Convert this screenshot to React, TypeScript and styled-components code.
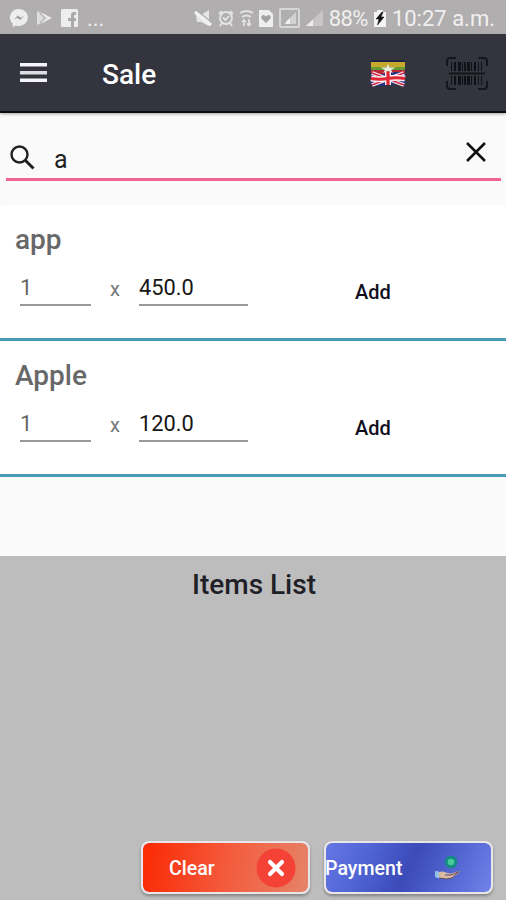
import React from "react";
import styled, { createGlobalStyle } from "styled-components";

const GlobalStyle = createGlobalStyle`
  * { box-sizing: border-box; }
  body { margin: 0; background: #bdbdbd; font-family: Roboto, sans-serif; }
`;

const Screen = styled.div`
  width: 506px;
  height: 900px;
  display: flex;
  flex-direction: column;
  overflow: hidden;
  background: #fafafa;
`;

const StatusBar = styled.div`
  height: 34px;
  flex: none;
  display: flex;
  align-items: flex-start;
  justify-content: space-between;
  padding: 7px 11px 0 10px;
  background: #b0aeaf;
  border-bottom: 1px solid #b9b9b9;
  color: #f0f0f0;
`;

const StatusGroup = styled.div<{ $gap: number }>`
  display: flex;
  align-items: center;
  gap: ${(p) => p.$gap}px;
  height: 22px;
`;

const StatusText = styled.span<{ $spacing?: number }>`
  margin-top: 2px;
  font-size: 22px;
  line-height: 22px;
  white-space: nowrap;
  letter-spacing: ${(p) => p.$spacing ?? 0}px;
`;

const AppBar = styled.header`
  height: 79px;
  flex: none;
  display: flex;
  align-items: center;
  padding: 1px 18px 0 19px;
  background: #33343d;
  border-bottom: 2px solid #0b0b0e;
  box-shadow: 0 1px 3px rgba(0, 0, 0, 0.35);
`;

const Title = styled.h1`
  margin: 3px auto 0 55px;
  color: #fff;
  font-size: 28px;
  line-height: 32px;
  font-weight: 500;
`;

const BarcodeSlot = styled.div`
  display: flex;
  margin-left: 41px;
`;

const SearchBar = styled.div`
  height: 68px;
  flex: none;
  display: flex;
  align-items: flex-start;
  margin: 0 5px 24px 6px;
  padding: 31px 14px 0 3px;
  border-bottom: 3px solid #f06590;
`;

const Query = styled.span`
  margin: 2px auto 0 18px;
  color: #222;
  font-size: 25px;
  line-height: 28px;
`;

const CloseSlot = styled.div`
  display: flex;
  margin-top: -3px;
`;

const Card = styled.article`
  height: 136px;
  flex: none;
  padding: 19px 15px 0;
  background: #fff;
  border-bottom: 3px solid #4a9bb8;
  border-radius: 4px 4px 0 0;
`;

const ItemName = styled.h2`
  margin: 0;
  color: #686868;
  font-size: 28px;
  line-height: 32px;
  font-weight: 500;
`;

const ItemRow = styled.div`
  display: flex;
  align-items: flex-start;
  padding: 19px 0 0 5px;
`;

const Field = styled.span<{ $width: number; $muted?: boolean }>`
  width: ${(p) => p.$width}px;
  height: 31px;
  border-bottom: 2px solid #999;
  color: ${(p) => (p.$muted ? "#666" : "#151515")};
  font-size: 21.8px;
  line-height: 26px;
`;

const Times = styled.span`
  width: 48px;
  text-align: center;
  color: #777;
  font-size: 20px;
  line-height: 28px;
`;

const AddButton = styled.button`
  margin: 4px 0 0 107px;
  padding: 0;
  border: 0;
  background: none;
  color: #10101c;
  font: 500 20px/26px Roboto, sans-serif;
`;

const ItemsPanel = styled.section`
  margin-top: auto;
  height: 344px;
  flex: none;
  display: flex;
  flex-direction: column;
  justify-content: space-between;
  padding: 13px 13px 6px 0;
  background: #bdbdbd;
`;

const PanelTitle = styled.h2`
  margin: 0 0 0 15px;
  text-align: center;
  color: #1e1f27;
  font-size: 28px;
  line-height: 32px;
  font-weight: 500;
`;

const Actions = styled.div`
  display: flex;
  justify-content: flex-end;
  gap: 14px;
`;

const ActionButton = styled.button<{ $fill: string; $inset: number; $end: number }>`
  width: 169px;
  height: 53px;
  display: flex;
  align-items: center;
  justify-content: space-between;
  padding: 0 ${(p) => p.$end}px 0 ${(p) => p.$inset}px;
  border: 2px solid #e9e6ea;
  border-radius: 8px;
  background: ${(p) => p.$fill} padding-box;
  box-shadow: 0 2px 3px rgba(0, 0, 0, 0.3);
  color: #fff;
  font: 500 19.6px/26px Roboto, sans-serif;
`;

const ActionLabel = styled.span<{ $pull?: number }>`
  margin: 2px 0 0 ${(p) => -(p.$pull ?? 0)}px;
`;

const Icon = styled.svg`
  display: block;
  flex: none;
  overflow: visible;
`;

const Messenger = () => (
  <Icon width="18" height="18" viewBox="0 0 18 18">
    <path d="M9 0a9 8.5 0 0 0-6.2 14.7V18l3-1.5A9 8.5 0 1 0 9 0z" fill="#ededed" />
    <path d="M4 10.500l4-4 2.500 2.300L14 7l-4 4-2.500-2.300z" fill="#99979a" />
  </Icon>
);

const Play = () => (
  <Icon width="15" height="16" viewBox="0 0 15 16">
    <path d="M0 1v14l9-4.500V5.500z" fill="#dedddd" />
    <path d="M3 3l5 5-5 5" fill="none" stroke="#b0aeaf" strokeWidth="1.200" />
    <path d="M3 2l12 6-12 6 7-6z" fill="#eee" />
  </Icon>
);

const Facebook = () => (
  <Icon width="17" height="18" viewBox="0 0 17 18">
    <rect width="17" height="18" rx="1.500" fill="#ededed" />
    <path d="M10 18v-6H7V9h3V6q0-3 3-3h2v3h-2v3h2v3h-2v6z" fill="#aaa8a9" />
  </Icon>
);

const Muted = () => (
  <Icon width="17" height="17" viewBox="0 0 17 17">
    <path d="M1 5h5l8-5v16l-8-4H2z" fill="#e6e5e5" />
    <path d="M1 0l16 12.500" stroke="#b0aeaf" strokeWidth="1.500" />
    <path d="M0 2l16 13" stroke="#f2f1f1" strokeWidth="3" />
  </Icon>
);

const Alarm = () => (
  <Icon width="16" height="18" viewBox="0 0 16 18" fill="none" stroke="#e6e5e5" strokeWidth="1.800">
    <circle cx="8" cy="9" r="6" />
    <path d="M1 5l3-3M15 5l-3-3M4 14l-2 3M12 14l2 3M5 8.500l2.500 2.500L11 7" />
  </Icon>
);

const Wifi = () => (
  <Icon width="13" height="17" viewBox="0 0 13 17" fill="none" stroke="#e4e3e3" strokeWidth="2">
    <path d="M0 3q6.500-4 13 0M2 7q4.500-3 9 0" />
    <path d="M4 10v6M2 12l2-2 2 2M9 9v6M7 13.500l2 2 2-2" strokeWidth="1.700" />
  </Icon>
);

const HeartCard = () => (
  <Icon width="14" height="17" viewBox="0 0 14 17">
    <path d="M0 0h10l4 4v13H0z" fill="#efeeee" />
    <path d="M7 13L2.500 8.500q-1-3 1.700-3.500Q6 5 7 6.500 8 5 9.800 5q2.700.5 1.700 3.500z" fill="#a3a1a2" />
  </Icon>
);

const BoxedSignal = () => (
  <Icon width="21" height="20" viewBox="0 0 21 20">
    <rect x="1" y="1" width="19" height="18" rx="1" fill="none" stroke="#d8d7d7" strokeWidth="2" />
    <path d="M5 16L17 4v12z" fill="#d3d2d2" />
    <path d="M7 16v-2l4-4v6z" fill="#f1f1f1" />
  </Icon>
);

const Signal = () => (
  <Icon width="17" height="17" viewBox="0 0 17 17">
    <path d="M0 16L17 0v16z" fill="#c8c6c7" />
    <path d="M0 16l7-6.500V16z" fill="#eee" />
  </Icon>
);

const Battery = () => (
  <Icon width="12" height="17" viewBox="0 0 12 17">
    <path d="M0 2h3V0h6v2h3v15H0z" fill="#f4f4f4" />
    <path d="M8 2L2 9h3l-1.500 6L10 7H7l2-5z" fill="#111" stroke="#111" strokeWidth=".5" />
  </Icon>
);

const Menu = () => (
  <Icon width="28" height="20" viewBox="0 0 28 20" fill="#f4f4fa">
    <rect x="1" y="0" width="27" height="3.500" />
    <rect x="1" y="8" width="27" height="3.500" fill="#dddde4" />
    <rect x="1" y="15.500" width="27" height="3.500" />
  </Icon>
);

const Flags = () => (
  <Icon width="34" height="27" viewBox="0 0 34 27">
    <rect width="34" height="3" fill="#1c2446" />
    <rect y="2" width="34" height="5" fill="#c9a92d" />
    <rect y="7" width="34" height="4" fill="#669b35" />
    <path d="M0 10h34v4H0z" fill="#b92736" />
    <path d="M0 13q9 2 17 0t17 0v13q-8-3-17-1-9 2-17 0z" fill="#232e82" />
    <path d="M1 13l32 12M33 13L1 25" stroke="#f0edf4" strokeWidth="4" />
    <path d="M1 13l32 12M33 13L1 25" stroke="#d82743" strokeWidth="1.600" />
    <path d="M17 12v13M0 18.500q9 1.500 17 0t17 0" fill="none" stroke="#f6edf1" strokeWidth="6" />
    <path d="M17 12v13M0 18.500q9 1.500 17 0t17 0" fill="none" stroke="#e02434" strokeWidth="3.200" />
    <path d="M17 4l1.500 3.500h6L20 10l2 3-5-2-5 2 2-3-4.500-2.500h6z" fill="#e9eddd" />
  </Icon>
);

const bars = [[5, 1], [8, 2], [12, 3], [16, 1], [18, 2], [21, 3], [25, 1], [28, 2], [32, 1], [35, 1]];

const Barcode = () => (
  <Icon width="42" height="33" viewBox="0 0 42 33">
    <path
      d="M1 9V4q0-3 3-3h6M32 1h6q3 0 3 3v5M1 24v5q0 3 3 3h6M32 32h6q3 0 3-3v-5M3 16.500h36"
      fill="none"
      stroke="#15161b"
      strokeWidth="2"
    />
    {bars.map(([x, w]) => (
      <path key={x} d={`M${x} 5h${w}v9h-${w}zM${x} 19h${w}v9h-${w}z`} fill="#111217" />
    ))}
  </Icon>
);

const Search = () => (
  <Icon width="27" height="27" viewBox="0 0 27 27" fill="none" stroke="#202020">
    <circle cx="10.500" cy="10.500" r="8" strokeWidth="2.400" />
    <path d="M16.500 16.500l8 8" strokeWidth="3" />
  </Icon>
);

const Close = () => (
  <Icon width="22" height="22" viewBox="0 0 22 22">
    <path d="M2 2l18 18M20 2L2 20" stroke="#111" strokeWidth="2.600" />
  </Icon>
);

const ClearMark = () => (
  <Icon width="40" height="40" viewBox="0 0 40 40">
    <circle cx="20" cy="20" r="19.500" fill="#f44336" />
    <path d="M14 14l12 12M26 14L14 26" stroke="#fff" strokeWidth="4.200" strokeLinecap="round" />
  </Icon>
);

const PayMark = () => (
  <Icon width="26" height="26" viewBox="0 0 26 26">
    <circle cx="16" cy="7" r="6.300" fill="#138b83" />
    <circle cx="16" cy="7" r="3.300" fill="#47ca9a" />
    <path d="M0 16l4 .5v7L0 22z" fill="#91c3e4" />
    <path d="M4 17q5-1.500 8 1l4 .5 8-2.500q2 .5-1 2.500l-6 4.500q-5 2-13 0z" fill="#d8b9a1" />
    <path d="M10 20h6q3-1 8-3.500L17 23q-5 2-13 0" fill="none" stroke="#5c4a66" strokeWidth="1" />
  </Icon>
);

const items = [
  { name: "app", price: "450.0" },
  { name: "Apple", price: "120.0" },
];

export default function App() {
  return (
    <Screen>
      <GlobalStyle />
      <StatusBar>
        <StatusGroup $gap={9}>
          <Messenger />
          <Play />
          <Facebook />
          <StatusText>...</StatusText>
        </StatusGroup>
        <StatusGroup $gap={6}>
          <Muted />
          <Alarm />
          <Wifi />
          <HeartCard />
          <BoxedSignal />
          <Signal />
          <StatusText $spacing={-0.6}>88%</StatusText>
          <Battery />
          <StatusText>10:27 a.m.</StatusText>
        </StatusGroup>
      </StatusBar>
      <AppBar>
        <Menu />
        <Title>Sale</Title>
        <Flags />
        <BarcodeSlot>
          <Barcode />
        </BarcodeSlot>
      </AppBar>
      <SearchBar>
        <Search />
        <Query>a</Query>
        <CloseSlot>
          <Close />
        </CloseSlot>
      </SearchBar>
      {items.map((item) => (
        <Card key={item.name}>
          <ItemName>{item.name}</ItemName>
          <ItemRow>
            <Field $width={71} $muted>1</Field>
            <Times>x</Times>
            <Field $width={109}>{item.price}</Field>
            <AddButton>Add</AddButton>
          </ItemRow>
        </Card>
      ))}
      <ItemsPanel>
        <PanelTitle>Items List</PanelTitle>
        <Actions>
          <ActionButton $fill="linear-gradient(100deg, #fa2d08 5%, #f45a3c 50%, #e58468 100%)" $inset={26} $end={12}>
            <ActionLabel>Clear</ActionLabel>
            <ClearMark />
          </ActionButton>
          <ActionButton $fill="linear-gradient(115deg, #6577e3 0%, #5064d4 25%, #3b4bb8 50%, #5366d2 75%, #7182ea 100%)" $inset={0} $end={30}>
            <ActionLabel $pull={1}>Payment</ActionLabel>
            <PayMark />
          </ActionButton>
        </Actions>
      </ItemsPanel>
    </Screen>
  );
}
